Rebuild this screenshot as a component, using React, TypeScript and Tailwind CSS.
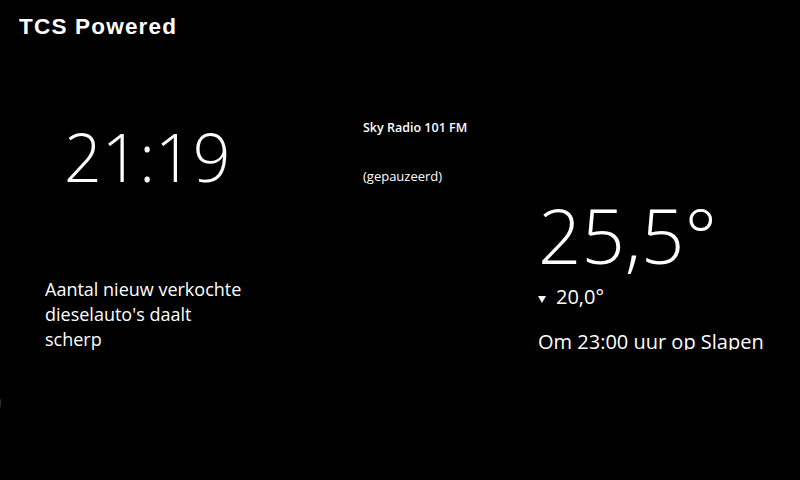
import React from "react";

export default function App() {
  const os = { fontFamily: '"Open Sans", sans-serif' };
  return (
    <div className="w-[800px] h-[480px] bg-black text-white overflow-hidden relative">
      <div className="absolute left-0 top-[399px] w-px h-[8px] bg-[#2a2a2a]" />
      <div
        className="pl-[19px] pt-[14px] pb-[2px] text-[22.5px] font-bold leading-[26px] tracking-[1.2px]"
        style={{ fontFamily: '"Liberation Sans", Arial, sans-serif' }}
      >
        TCS Powered
      </div>
      <div className="flex" style={os}>
        <div className="w-[300px] flex flex-col">
          <div className="pl-[64px] mt-[69px] text-[66px] font-light leading-[90px]">21:19</div>
          <div className="pl-[45px] mt-[76px] w-[290px] text-[18px] leading-[25px]">
            Aantal nieuw verkochte<br />dieselauto's daalt<br />scherp
          </div>
        </div>
        <div className="w-[236px] pl-[63px] flex flex-col">
          <div className="mt-[77px] text-[12.5px] font-semibold leading-[18px]">Sky Radio 101 FM</div>
          <div className="mt-[30px] text-[13px] leading-[18px]">(gepauzeerd)</div>
        </div>
        <div className="flex flex-col pl-[2px]">
          <div className="mt-[148px] text-[76px] font-light leading-[90px]">25,5°</div>
          <div className="flex items-center mt-[4px] text-[20px] leading-[26px]">
            <svg width="8" height="7" viewBox="0 0 8 7" className="mr-[10px] mt-[5px]">
              <polygon points="0,0 8,0 4,7" fill="white" />
            </svg>
            <span>20,0°</span>
          </div>
          <div className="mt-[16px] h-[24px] overflow-hidden text-[20px] leading-[32px] whitespace-nowrap">
            Om 23:00 uur op Slapen
          </div>
        </div>
      </div>
    </div>
  );
}
